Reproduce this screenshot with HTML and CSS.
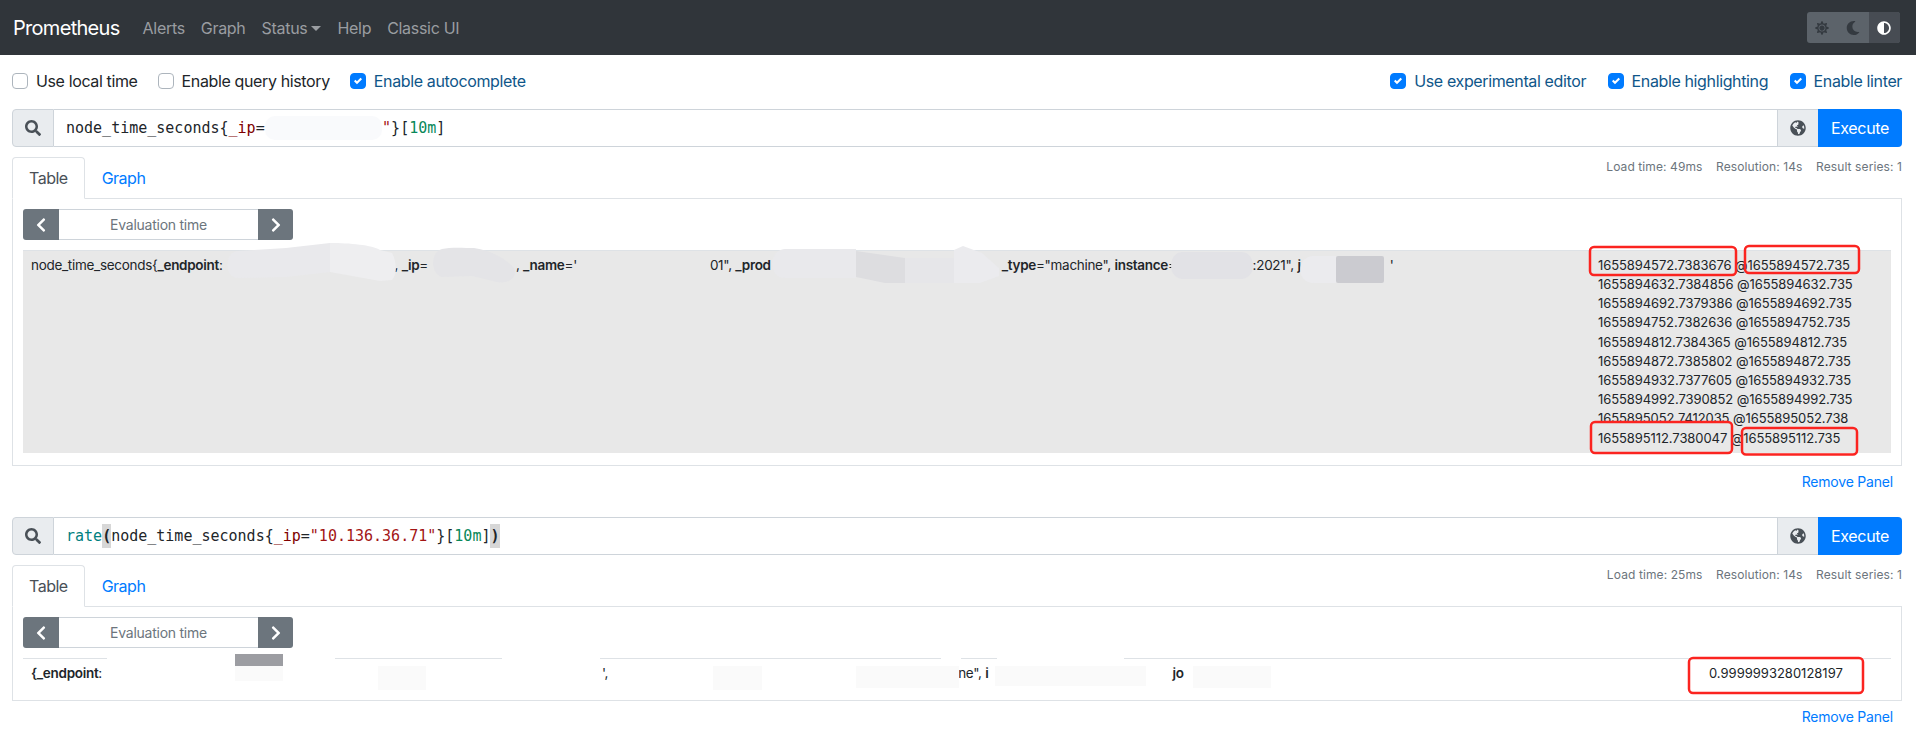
FILE: index.html
```html
<!DOCTYPE html>
<html lang="en">
<head>
<meta charset="utf-8">
<title>Prometheus Time Series Collection and Processing Server</title>
<link rel="stylesheet" href="styles.css">
</head>
<body>
<nav class="navbar">
  <a class="brand">Prometheus</a>
  <a class="nav-link">Alerts</a>
  <a class="nav-link">Graph</a>
  <a class="nav-link">Status<span class="caret"></span></a>
  <a class="nav-link">Help</a>
  <a class="nav-link">Classic UI</a>
  <div class="theme-group">
    <span class="theme-btn"><svg class="icon-sm" viewBox="0 0 512 512"><path d="M256 160c-52.9 0-96 43.1-96 96s43.1 96 96 96 96-43.1 96-96-43.1-96-96-96zm246.4 80.5l-94.7-47.3 33.5-100.4c4.5-13.6-8.4-26.5-21.9-21.9l-100.4 33.5-47.4-94.8c-6.4-12.8-24.6-12.8-31 0l-47.3 94.7L92.7 70.8c-13.6-4.5-26.5 8.4-21.9 21.9l33.5 100.4-94.7 47.4c-12.8 6.4-12.8 24.6 0 31l94.7 47.3-33.5 100.5c-4.5 13.6 8.4 26.5 21.9 21.9l100.4-33.5 47.3 94.7c6.4 12.8 24.6 12.8 31 0l47.3-94.7 100.4 33.5c13.6 4.5 26.5-8.4 21.9-21.9l-33.5-100.4 94.7-47.3c13-6.5 13-24.7.2-31.1zm-155.9 106c-49.9 49.9-131.1 49.9-181 0-49.9-49.9-49.9-131.1 0-181 49.9-49.9 131.1-49.9 181 0 49.9 49.9 49.9 131.1 0 181z"/></svg></span>
    <span class="theme-btn"><svg class="icon-sm" viewBox="0 0 512 512"><path d="M283.211 512c78.962 0 151.079-35.925 198.857-94.792 7.068-8.708-.639-21.43-11.562-19.35-124.203 23.654-238.262-71.576-238.262-196.954 0-72.222 38.662-138.635 101.498-174.394 9.686-5.512 7.25-20.197-3.756-22.23A258.156 258.156 0 0 0 283.211 0c-141.309 0-256 114.511-256 256 0 141.309 114.511 256 256 256z"/></svg></span>
    <span class="theme-btn active"><svg class="icon-sm" viewBox="0 0 512 512"><path d="M8 256c0 136.966 111.033 248 248 248s248-111.034 248-248S392.966 8 256 8 8 119.033 8 256zm248 184V72c101.705 0 184 82.311 184 184 0 101.705-82.311 184-184 184z"/></svg></span>
  </div>
</nav>

<main class="container">
  <div class="options">
    <div class="option-group">
      <label class="option"><span class="box"></span>Use local time</label>
      <label class="option"><span class="box"></span>Enable query history</label>
      <label class="option on"><span class="box"><svg viewBox="0 0 8 8"><path d="M6.564.75l-3.59 3.612-1.538-1.55L0 4.26l2.974 2.99L8 2.193z"/></svg></span>Enable autocomplete</label>
    </div>
    <div class="option-group right">
      <label class="option on"><span class="box"><svg viewBox="0 0 8 8"><path d="M6.564.75l-3.59 3.612-1.538-1.55L0 4.26l2.974 2.99L8 2.193z"/></svg></span>Use experimental editor</label>
      <label class="option on"><span class="box"><svg viewBox="0 0 8 8"><path d="M6.564.75l-3.59 3.612-1.538-1.55L0 4.26l2.974 2.99L8 2.193z"/></svg></span>Enable highlighting</label>
      <label class="option on"><span class="box"><svg viewBox="0 0 8 8"><path d="M6.564.75l-3.59 3.612-1.538-1.55L0 4.26l2.974 2.99L8 2.193z"/></svg></span>Enable linter</label>
    </div>
  </div>

  <section class="panel">
    <div class="query">
      <span class="addon search"><svg class="icon" viewBox="0 0 512 512"><path d="M505 442.7L405.3 343c-4.5-4.5-10.6-7-17-7H372c27.6-35.3 44-79.7 44-128C416 93.1 322.9 0 208 0S0 93.1 0 208s93.1 208 208 208c48.3 0 92.7-16.4 128-44v16.3c0 6.4 2.5 12.5 7 17l99.7 99.7c9.4 9.4 24.6 9.4 33.9 0l28.3-28.3c9.4-9.4 9.4-24.6.1-34zM208 336c-70.7 0-128-57.2-128-128 0-70.7 57.2-128 128-128 70.7 0 128 57.2 128 128 0 70.7-57.2 128-128 128z"/></svg></span>
      <div class="editor">node_time_seconds{<span class="lbl">_ip</span>=<span class="redacted"></span><span class="str">"</span>}[<span class="num">10m</span>]</div>
      <span class="addon globe"><svg class="icon" viewBox="0 0 496 512"><path d="M248 8C111.03 8 0 119.03 0 256s111.03 248 248 248 248-111.03 248-248S384.97 8 248 8zm82.29 357.6c-3.9 3.88-7.99 7.95-11.31 11.28-2.99 3-5.1 6.7-6.17 10.71-1.51 5.66-2.73 11.38-4.77 16.87l-17.39 46.85c-13.76 3-28 4.69-42.65 4.69v-27.38c1.69-12.62-7.64-36.26-22.63-51.25-6-6-9.37-14.14-9.37-22.63v-32.01c0-11.64-6.27-22.34-16.46-27.97-14.37-7.95-34.81-19.06-48.81-26.11-11.48-5.78-22.1-13.14-31.65-21.75l-.8-.72a114.792 114.792 0 0 1-18.06-20.74c-9.38-13.77-24.66-36.42-34.59-51.14 20.47-45.5 57.36-82.04 103.2-101.89l24.01 12.01C203.48 89.74 216 82.01 216 70.11v-11.3c7.99-1.29 16.12-2.11 24.39-2.42l28.3 28.3c6.25 6.25 6.25 16.38 0 22.63L264 112l-10.34 10.34c-3.12 3.12-3.12 8.19 0 11.31l4.69 4.69c3.12 3.12 3.12 8.19 0 11.31l-8 8a8.008 8.008 0 0 1-5.66 2.34h-8.99c-2.08 0-4.08.81-5.58 2.27l-9.92 9.65a8.008 8.008 0 0 0-1.58 9.31l15.59 31.19c2.66 5.32-1.21 11.58-7.15 11.58h-5.64c-1.93 0-3.79-.7-5.24-1.96l-9.28-8.06a16.017 16.017 0 0 0-15.55-3.1l-31.17 10.39a11.95 11.95 0 0 0-8.17 11.34c0 4.53 2.56 8.66 6.61 10.69l11.08 5.54c9.41 4.71 19.79 7.16 30.31 7.16s22.59 27.29 32 32h66.75c8.49 0 16.62 3.37 22.63 9.37l13.69 13.69a30.503 30.503 0 0 1 8.93 21.57 46.536 46.536 0 0 1-13.72 32.98zM417 274.25c-5.79-1.45-10.84-5-14.15-9.97l-17.98-26.97a23.97 23.97 0 0 1 0-26.62l19.59-29.38c2.32-3.47 5.5-6.29 9.24-8.15l12.98-6.49C440.2 193.59 448 223.87 448 256c0 8.67-.74 17.16-1.82 25.54L417 274.25z"/></svg></span>
      <button class="execute">Execute</button>
    </div>
    <div class="tabs">
      <div class="tab-list"><a class="tab active">Table</a><a class="tab">Graph</a></div>
      <div class="stats"><span>Load time: 49ms</span><span>Resolution: 14s</span><span>Result series: 1</span></div>
    </div>
    <div class="tab-content">
      <div class="eval">
        <button class="step"><svg viewBox="0 0 320 512"><path d="M34.52 239.03L228.87 44.69c9.37-9.37 24.57-9.37 33.94 0l22.67 22.67c9.36 9.36 9.37 24.52.04 33.9L131.49 256l154.02 154.75c9.34 9.38 9.32 24.54-.04 33.9l-22.67 22.67c-9.37 9.37-24.57 9.37-33.94 0L34.52 272.97c-9.37-9.37-9.37-24.57 0-33.94z"/></svg></button>
        <span class="eval-input">Evaluation time</span>
        <button class="step"><svg viewBox="0 0 320 512"><path d="M285.476 272.971L91.132 467.314c-9.373 9.373-24.569 9.373-33.941 0l-22.667-22.667c-9.357-9.357-9.375-24.522-.04-33.901L188.505 256 34.484 101.255c-9.335-9.379-9.317-24.544.04-33.901l22.667-22.667c9.373-9.373 24.569-9.373 33.941 0L285.475 239.03c9.373 9.372 9.373 24.568.001 33.941z"/></svg></button>
      </div>
      <div class="row striped">
        <div class="series">node_time_seconds{<b>_endpoint</b>:<i class="s s1"></i>, <b>_ip</b>=<i class="s s2"></i>, <b>_name</b>='<i class="s s3"></i>01", <b>_prod</b><i class="s s4"></i><b>_type</b>="machine", <b>instance</b>=<i class="s s5"></i>:2021", <b>j</b><i class="s s6"></i>'</div>
        <div class="values">
          <div>1655894572.7383676 @1655894572.735</div>
          <div>1655894632.7384856 @1655894632.735</div>
          <div>1655894692.7379386 @1655894692.735</div>
          <div>1655894752.7382636 @1655894752.735</div>
          <div>1655894812.7384365 @1655894812.735</div>
          <div>1655894872.7385802 @1655894872.735</div>
          <div>1655894932.7377605 @1655894932.735</div>
          <div>1655894992.7390852 @1655894992.735</div>
          <div>1655895052.7412035 @1655895052.738</div>
          <div>1655895112.7380047 @1655895112.735</div>
        </div>
      </div>
    </div>
    <div class="remove"><a>Remove Panel</a></div>
  </section>

  <section class="panel">
    <div class="query">
      <span class="addon search"><svg class="icon" viewBox="0 0 512 512"><path d="M505 442.7L405.3 343c-4.5-4.5-10.6-7-17-7H372c27.6-35.3 44-79.7 44-128C416 93.1 322.9 0 208 0S0 93.1 0 208s93.1 208 208 208c48.3 0 92.7-16.4 128-44v16.3c0 6.4 2.5 12.5 7 17l99.7 99.7c9.4 9.4 24.6 9.4 33.9 0l28.3-28.3c9.4-9.4 9.4-24.6.1-34zM208 336c-70.7 0-128-57.2-128-128 0-70.7 57.2-128 128-128 70.7 0 128 57.2 128 128 0 70.7-57.2 128-128 128z"/></svg></span>
      <div class="editor"><span class="fn">rate</span><span class="match">(</span>node_time_seconds{<span class="lbl">_ip</span>=<span class="str">"10.136.36.71"</span>}[<span class="num">10m</span>]<span class="match">)</span></div>
      <span class="addon globe"><svg class="icon" viewBox="0 0 496 512"><path d="M248 8C111.03 8 0 119.03 0 256s111.03 248 248 248 248-111.03 248-248S384.97 8 248 8zm82.29 357.6c-3.9 3.88-7.99 7.95-11.31 11.28-2.99 3-5.1 6.7-6.17 10.71-1.51 5.66-2.73 11.38-4.77 16.87l-17.39 46.85c-13.76 3-28 4.69-42.65 4.69v-27.38c1.69-12.62-7.64-36.26-22.63-51.25-6-6-9.37-14.14-9.37-22.63v-32.01c0-11.64-6.27-22.34-16.46-27.97-14.37-7.95-34.81-19.06-48.81-26.11-11.48-5.78-22.1-13.14-31.65-21.75l-.8-.72a114.792 114.792 0 0 1-18.06-20.74c-9.38-13.77-24.66-36.42-34.59-51.14 20.47-45.5 57.36-82.04 103.2-101.89l24.01 12.01C203.48 89.74 216 82.01 216 70.11v-11.3c7.99-1.29 16.12-2.11 24.39-2.42l28.3 28.3c6.25 6.25 6.25 16.38 0 22.63L264 112l-10.34 10.34c-3.12 3.12-3.12 8.19 0 11.31l4.69 4.69c3.12 3.12 3.12 8.19 0 11.31l-8 8a8.008 8.008 0 0 1-5.66 2.34h-8.99c-2.08 0-4.08.81-5.58 2.27l-9.92 9.65a8.008 8.008 0 0 0-1.58 9.31l15.59 31.19c2.66 5.32-1.21 11.58-7.15 11.58h-5.64c-1.93 0-3.79-.7-5.24-1.96l-9.28-8.06a16.017 16.017 0 0 0-15.55-3.1l-31.17 10.39a11.95 11.95 0 0 0-8.17 11.34c0 4.53 2.56 8.66 6.61 10.69l11.08 5.54c9.41 4.71 19.79 7.16 30.31 7.16s22.59 27.29 32 32h66.75c8.49 0 16.62 3.37 22.63 9.37l13.69 13.69a30.503 30.503 0 0 1 8.93 21.57 46.536 46.536 0 0 1-13.72 32.98zM417 274.25c-5.79-1.45-10.84-5-14.15-9.97l-17.98-26.97a23.97 23.97 0 0 1 0-26.62l19.59-29.38c2.32-3.47 5.5-6.29 9.24-8.15l12.98-6.49C440.2 193.59 448 223.87 448 256c0 8.67-.74 17.16-1.82 25.54L417 274.25z"/></svg></span>
      <button class="execute">Execute</button>
    </div>
    <div class="tabs">
      <div class="tab-list"><a class="tab active">Table</a><a class="tab">Graph</a></div>
      <div class="stats"><span>Load time: 25ms</span><span>Resolution: 14s</span><span>Result series: 1</span></div>
    </div>
    <div class="tab-content">
      <div class="eval">
        <button class="step"><svg viewBox="0 0 320 512"><path d="M34.52 239.03L228.87 44.69c9.37-9.37 24.57-9.37 33.94 0l22.67 22.67c9.36 9.36 9.37 24.52.04 33.9L131.49 256l154.02 154.75c9.34 9.38 9.32 24.54-.04 33.9l-22.67 22.67c-9.37 9.37-24.57 9.37-33.94 0L34.52 272.97c-9.37-9.37-9.37-24.57 0-33.94z"/></svg></button>
        <span class="eval-input">Evaluation time</span>
        <button class="step"><svg viewBox="0 0 320 512"><path d="M285.476 272.971L91.132 467.314c-9.373 9.373-24.569 9.373-33.941 0l-22.667-22.667c-9.357-9.357-9.375-24.522-.04-33.901L188.505 256 34.484 101.255c-9.335-9.379-9.317-24.544.04-33.901l22.667-22.667c9.373-9.373 24.569-9.373 33.941 0L285.475 239.03c9.373 9.372 9.373 24.568.001 33.941z"/></svg></button>
      </div>
      <div class="row">
        <div class="series"><b>{_endpoint</b>:<i class="s t1"></i>',<i class="s t2"></i>ne", <b>i</b><i class="s t3"></i><b>jo</b></div>
        <div class="values single">0.9999993280128197</div>
      </div>
    </div>
    <div class="remove"><a>Remove Panel</a></div>
  </section>
</main>

<svg class="overlay" viewBox="0 0 1916 752" width="1916" height="752">
  <g>
    <path class="b-a" d="M238 251L286 248L330 243V272L286 277L238 278C224 278 224 252 238 251Z"/>
    <path class="b-b" d="M330 243C350 243 372 245 380 250L392 253C397 262 397 275 392 280L380 281L330 272Z"/>
    <path class="b-c" d="M442 249C450 247 465 248 474 248C490 250 505 258 514 268C518 278 508 284 497 282L472 276L442 277C430 274 430 252 442 249Z"/>
    <path class="b-d" d="M785 249H856V278H785C768 278 768 250 785 249Z"/>
    <path class="b-e" d="M856 251L905 258V283H885L856 277Z"/>
    <rect class="b-f" x="905" y="258" width="49" height="25"/>
    <path class="b-g" d="M954 250L963 246L982 253L999 268V276L980 283H954Z"/>
    <path class="b-h" d="M1183 252H1241C1257 252 1257 279 1241 279H1183C1167 279 1167 252 1183 252Z"/>
    <path class="b-g" d="M1336 256H1312C1296 258 1296 283 1314 283H1336Z"/>
    <rect class="b-i" x="1336" y="256" width="48" height="27" rx="2"/>
  </g>
  <g>
    <rect class="wipe" x="107" y="655" width="228" height="7"/>
    <rect class="wipe" x="502" y="655" width="98" height="7"/>
    <rect class="wipe" x="941" y="655" width="20" height="7"/>
    <rect class="wipe" x="997" y="655" width="127" height="7"/>
    <rect class="mark" x="235" y="654" width="48" height="12"/>
    <rect class="faint" x="235" y="666" width="48" height="15"/>
    <rect class="faint" x="378" y="666" width="48" height="24"/>
    <rect class="faint" x="713" y="666" width="49" height="24"/>
    <rect class="faint" x="856" y="666" width="103" height="22"/>
    <rect class="faint" x="995" y="666" width="151" height="20"/>
    <rect class="faint" x="1193" y="666" width="78" height="22"/>
  </g>
  <g class="callouts">
    <rect x="1590" y="247" width="146" height="28" rx="4"/>
    <rect x="1745" y="246" width="114" height="27" rx="4"/>
    <rect x="1591" y="422" width="141" height="31" rx="4"/>
    <rect x="1742" y="428" width="115" height="26.500" rx="4"/>
    <rect x="1689" y="658" width="174" height="35" rx="4"/>
  </g>
</svg>
</body>
</html>
```
FILE: styles.css
```css
* { box-sizing: border-box; }
html, body { margin: 0; padding: 0; height: 752px; overflow: hidden; background: #fff; }
body { position: relative; font-family: "Inter", "Liberation Sans", sans-serif; font-size: 16px; line-height: 24px; color: #212529; }
button { font: inherit; border: 0; margin: 0; padding: 0; }

.navbar { display: flex; align-items: center; height: 55px; padding: 0 16px 0 13px; background: #30353a; }
.brand { font-size: 20px; color: #fff; margin-right: 15px; letter-spacing: -.7px; }
.nav-link { color: #9a9da1; padding: 0 8px; letter-spacing: -.3px; }
.caret { display: inline-block; margin-left: 4px; vertical-align: 3px; border-top: 5px solid #9a9da1; border-left: 5px solid transparent; border-right: 5px solid transparent; }
.theme-group { display: flex; margin-left: auto; height: 31px; border-radius: 3px; overflow: hidden; background: #5c636a; }
.theme-btn { display: flex; align-items: center; justify-content: center; width: 31px; fill: #343a40; }
.theme-btn.active { background: #474c53; fill: #fff; width: 31.500px; }
.icon-sm { width: 14px; height: 14px; }
.icon { width: 16px; height: 16px; }

.container { padding: 0 14px 0 12px; }
.options { display: flex; justify-content: space-between; height: 54px; padding-bottom: 2px; align-items: center; }
.option-group { display: flex; gap: 20px; }
.option-group.right { gap: 21.500px; }
.option { display: flex; align-items: center; gap: 8px; letter-spacing: -.37px; }
.option.on { color: #0f5689; }
.box { display: flex; align-items: center; justify-content: center; width: 16px; height: 16px; border: 1px solid #adb5bd; border-radius: 4px; background: #fff; }
.option.on .box { background: #007bff; border-color: #007bff; }
.box svg { width: 8px; height: 8px; fill: #fff; }

.panel { height: 408px; }
.panel:last-child { height: auto; }
.query { display: flex; height: 38px; border-radius: 4px; }
.addon { display: flex; align-items: center; justify-content: center; background: #e9ecef; border: 1px solid #ced4da; fill: #495057; }
.search { width: 42px; border-radius: 4px 0 0 4px; }
.globe { width: 41px; border-right: 0; }
.editor { flex: 1; display: flex; align-items: center; padding-left: 12px; border-top: 1px solid #ced4da; border-bottom: 1px solid #ced4da; font-family: "DejaVu Sans Mono", monospace; font-size: 15px; white-space: pre; color: #212529; }
.lbl { color: #800000; }
.str { color: #a31515; }
.num { color: #09885a; }
.fn { color: #008080; }
.match { background: #d7d7d7; font-weight: 700; }
.redacted { display: inline-block; width: 13ch; height: 24px; border-radius: 10px; background: #f9fafc; }
.execute { width: 84px; background: #007bff; color: #fff; border-radius: 0 4px 4px 0; letter-spacing: -.3px; }

.tabs { display: flex; justify-content: space-between; align-items: flex-start; height: 42px; margin-top: 10px; border-bottom: 1px solid #dee2e6; }
.tab-list { display: flex; height: 42px; }
.tab { padding: 8px 16px; height: 42px; color: #007bff; letter-spacing: -.5px; border: 1px solid transparent; }
.tab.active { color: #495057; background: #fff; border-color: #dee2e6 #dee2e6 #fff; border-radius: 4px 4px 0 0; }
.stats { display: flex; gap: 13.500px; padding-top: 1px; font-size: 12px; line-height: 18px; color: #6c757d; letter-spacing: .1px; }

.tab-content { padding: 10px 10px 12px; border: 1px solid #dee2e6; border-top: 0; }
.eval { display: flex; width: 270px; height: 31px; margin-bottom: 10px; }
.step { display: flex; align-items: center; justify-content: center; background: #6c757d; fill: #fff; }
.step:first-child { width: 36px; border-radius: 3px 0 0 3px; }
.step:last-child { width: 35px; border-radius: 0 3px 3px 0; }
.step svg { width: 10px; height: 16px; }
.eval-input { flex: 1; text-align: center; font-size: 14px; line-height: 29px; color: #6c757d; border-top: 1px solid #ced4da; border-bottom: 1px solid #ced4da; letter-spacing: -.25px; }

.row { display: flex; justify-content: space-between; border-top: 1px solid #dee2e6; padding: 4.800px 8px; font-size: 13.500px; line-height: 19.200px; }
.striped { background: #e8e8e8; }
.series { letter-spacing: -.3px; white-space: nowrap; }
.series b { font-weight: 600; }
.s { display: inline-block; }
.s1 { width: 172px; }
.s2 { width: 88px; }
.s3 { width: 133px; }
.s4 { width: 231px; }
.s5 { width: 76px; }
.s6 { width: 89px; }
.t1 { width: 500px; }
.t2 { width: 350px; }
.t3 { width: 184px; }
.values { width: 285px; font-size: 13px; letter-spacing: -.08px; white-space: nowrap; }
.values.single { width: 174px; letter-spacing: 0; }

.remove { display: flex; justify-content: flex-end; margin-top: 5px; padding-right: 9px; font-size: 14px; line-height: 21px; color: #007bff; letter-spacing: -.2px; }

.overlay { position: absolute; left: 0; top: 0; pointer-events: none; }
.b-a { fill: #e9e9ec; }
.b-b { fill: #eeeef0; }
.b-c { fill: #e4e4e7; }
.b-d { fill: #e9e9ec; }
.b-e { fill: #dddde0; }
.b-f { fill: #e6e6e9; }
.b-g { fill: #ebebee; }
.b-h { fill: #e2e2e6; }
.b-i { fill: #cbcbd0; }
.wipe { fill: #fff; }
.mark { fill: #9c9da2; }
.faint { fill: #fafafa; }
.callouts rect { fill: none; stroke: #fb2420; stroke-width: 2.500px; }
```
